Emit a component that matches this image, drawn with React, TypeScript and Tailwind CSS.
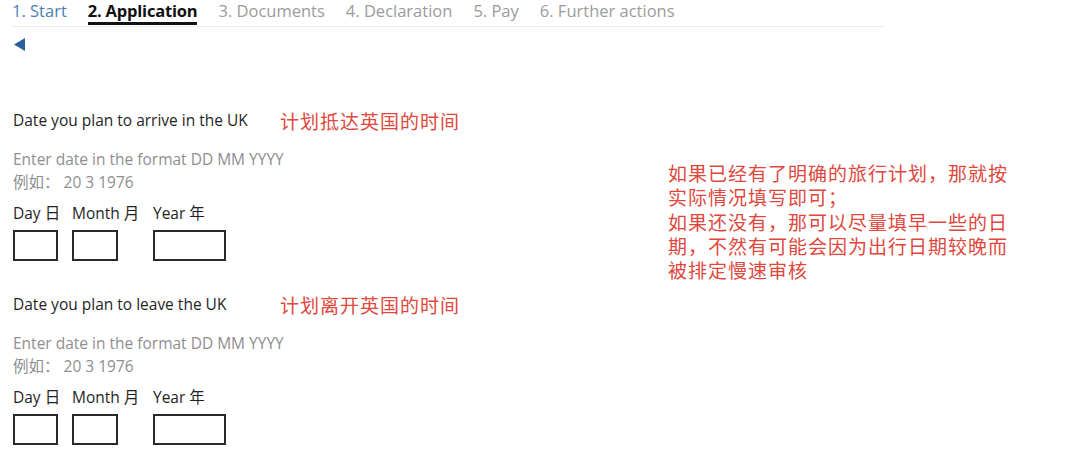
import React from "react";

const sans = { fontFamily: '"Open Sans", "Noto Sans", "Noto Sans CJK SC", sans-serif' };
const cjk = { fontFamily: '"Noto Sans CJK SC", "Noto Sans", sans-serif' };

function DateGroup({ label, note }: { label: string; note: string }) {
  return (
    <div className="flex flex-col">
      <div className="flex items-center h-[26px] mt-[2px]">
        <span className="text-[15.5px] text-[#1f1f1f] w-[267px]" style={sans}>{label}</span>
        <span className="text-[19px] text-[#e0473d] tracking-[1px]" style={cjk}>{note}</span>
      </div>
      <div className="mt-[14px] text-[15.5px] leading-[23px] text-[#8e8e8e]" style={sans}>
        <div>Enter date in the format DD MM YYYY</div>
        <div>例如： 20 3 1976</div>
      </div>
      <div className="mt-[8px] grid grid-cols-[59px_81px_auto] text-[15.5px] text-[#1f1f1f] leading-[22px]" style={sans}>
        <div className="flex flex-col gap-[6px]">
          <span className="whitespace-nowrap">Day 日</span>
          <div className="w-[45px] h-[31px] border-2 border-[#2a2a2a]" />
        </div>
        <div className="flex flex-col gap-[6px]">
          <span className="whitespace-nowrap">Month 月</span>
          <div className="w-[46px] h-[31px] border-2 border-[#2a2a2a]" />
        </div>
        <div className="flex flex-col gap-[6px]">
          <span className="whitespace-nowrap">Year 年</span>
          <div className="w-[73px] h-[31px] border-2 border-[#2a2a2a]" />
        </div>
      </div>
    </div>
  );
}

export default function App() {
  const tabs = ["1. Start", "2. Application", "3. Documents", "4. Declaration", "5. Pay", "6. Further actions"];
  return (
    <div className="w-[1080px] h-[476px] bg-white overflow-hidden relative" style={sans}>
      <div className="ml-[12px] w-[873px] border-b border-[#ececec] flex items-start gap-[21px] h-[27px] pt-[1px]">
        {tabs.map((t, i) => (
          <div
            key={t}
            className={
              i === 1
                ? "text-[16.5px] font-bold text-[#111] border-b-[3px] border-[#111] h-[24px] leading-[20px] tracking-[-0.2px]"
                : i === 0
                ? "text-[16.5px] text-[#4a7fb5] leading-[20px]"
                : "text-[16.5px] text-[#9b9b9b] leading-[20px]"
            }
          >
            {t}
          </div>
        ))}
      </div>
      <div className="ml-[14px] mt-[11px]">
        <svg width="12" height="13" viewBox="0 0 12 13">
          <polygon points="11,0 11,13 0,6.5" fill="#2a5fa0" />
        </svg>
      </div>
      <div className="flex mt-[55px] ml-[13px]">
        <div className="flex flex-col gap-[29px] w-[655px]">
          <DateGroup label="Date you plan to arrive in the UK" note="计划抵达英国的时间" />
          <DateGroup label="Date you plan to leave the UK" note="计划离开英国的时间" />
        </div>
        <div className="mt-[55px] text-[19px] leading-[24.3px] text-[#e0473d] tracking-[1px] w-[350px]" style={cjk}>
          <div>如果已经有了明确的旅行计划，那就按</div>
          <div>实际情况填写即可；</div>
          <div>如果还没有，那可以尽量填早一些的日</div>
          <div>期，不然有可能会因为出行日期较晚而</div>
          <div>被排定慢速审核</div>
        </div>
      </div>
    </div>
  );
}
